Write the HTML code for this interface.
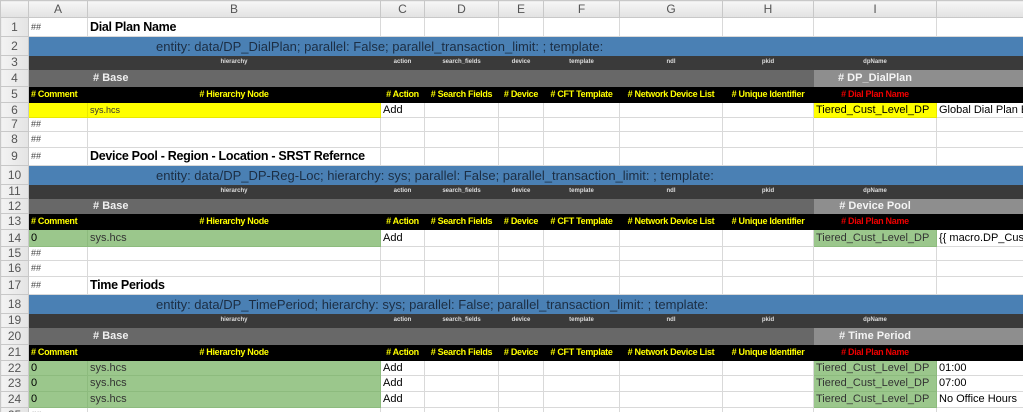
<!DOCTYPE html>
<html><head><meta charset="utf-8"><style>
*{margin:0;padding:0;box-sizing:border-box}
html,body{width:1023px;height:412px;overflow:hidden;background:#fff;font-family:"Liberation Sans",sans-serif}
table{border-collapse:collapse;table-layout:fixed;width:1051px}
td{border:1px solid #d9d9d9;font-size:11px;white-space:nowrap;overflow:hidden;padding:0 2px;color:#000;line-height:11px}
tr.h td{background:linear-gradient(#f6f6f6,#e2e2e2);color:#555;text-align:center;font-size:12px;border-color:#c8c8c8}
td.rn{background:linear-gradient(90deg,#f3f3f3,#e4e4e4);color:#555;text-align:center;font-size:12px;border-color:#c8c8c8;padding:0}
.t{font-weight:bold;font-size:12.5px;letter-spacing:-0.3px}
.bl{background:#4a80b4;border-color:#4a80b4;color:#1c2e44;font-size:13px}
.dk{background:#3a3a3a;border-color:#3a3a3a;color:#ddd;font-size:6px;font-weight:bold;text-align:center}
.gr{background:#686868;border-color:#686868;color:#f0f0f0;font-weight:bold;font-size:11px}
.lg{background:#8e8e8e;border-color:#8e8e8e;color:#f4f4f4;font-weight:bold;text-align:center;font-size:11px}
.bk{background:#000;border-color:#000;color:#ff0;font-weight:bold;font-size:9px;text-align:center;letter-spacing:-.3px}
.bk.r{color:#e00}
.y{background:#ff0;border-color:#e8e800}
.g{background:#9bc78c;border-color:#8dbb7e}
.sm{font-size:9px;color:#444}
</style></head><body>
<table>
<colgroup><col style="width:28px"><col style="width:59px"><col style="width:293px"><col style="width:44px"><col style="width:74px"><col style="width:45px"><col style="width:76px"><col style="width:103px"><col style="width:91px"><col style="width:123px"><col style="width:115px"></colgroup>
<tr class="h" style="height:17px"><td></td><td>A</td><td>B</td><td>C</td><td>D</td><td>E</td><td>F</td><td>G</td><td>H</td><td>I</td><td></td></tr>

<tr style="height:19px"><td class="rn">1</td><td class="sm">##</td><td class="t">Dial Plan Name</td><td></td><td></td><td></td><td></td><td></td><td></td><td></td><td></td></tr>
<tr style="height:19px"><td class="rn">2</td><td class="bl" colspan="10" style="padding-left:127px">entity: data/DP_DialPlan; parallel: False; parallel_transaction_limit: ; template:</td></tr>
<tr style="height:14px"><td class="rn">3</td><td class="dk"></td><td class="dk">hierarchy</td><td class="dk">action</td><td class="dk">search_fields</td><td class="dk">device</td><td class="dk">template</td><td class="dk">ndl</td><td class="dk">pkid</td><td class="dk">dpName</td><td class="dk"></td></tr>
<tr style="height:17px"><td class="rn">4</td><td class="gr"></td><td class="gr">&nbsp;# Base</td><td class="gr" colspan="6"></td><td class="lg"># DP_DialPlan</td><td class="lg"></td></tr>
<tr style="height:16px"><td class="rn">5</td><td class="bk" style="text-align:left"># Comment</td><td class="bk"># Hierarchy Node</td><td class="bk"># Action</td><td class="bk"># Search Fields</td><td class="bk"># Device</td><td class="bk"># CFT Template</td><td class="bk"># Network Device List</td><td class="bk"># Unique Identifier</td><td class="bk r"># Dial Plan Name</td><td class="bk"></td></tr>
<tr style="height:15px"><td class="rn">6</td><td class="y"></td><td class="y sm" style="color:#333">sys.hcs</td><td>Add</td><td></td><td></td><td></td><td></td><td></td><td class="y">Tiered_Cust_Level_DP</td><td>Global Dial Plan El</td></tr>
<tr style="height:14px"><td class="rn">7</td><td class="sm">##</td><td></td><td></td><td></td><td></td><td></td><td></td><td></td><td></td><td></td></tr>
<tr style="height:16px"><td class="rn">8</td><td class="sm">##</td><td></td><td></td><td></td><td></td><td></td><td></td><td></td><td></td><td></td></tr>

<tr style="height:18px"><td class="rn">9</td><td class="sm">##</td><td class="t">Device Pool - Region - Location - SRST Refernce</td><td></td><td></td><td></td><td></td><td></td><td></td><td></td><td></td></tr>
<tr style="height:19px"><td class="rn">10</td><td class="bl" colspan="10" style="padding-left:127px">entity: data/DP_DP-Reg-Loc; hierarchy: sys; parallel: False; parallel_transaction_limit: ; template:</td></tr>
<tr style="height:14px"><td class="rn">11</td><td class="dk"></td><td class="dk">hierarchy</td><td class="dk">action</td><td class="dk">search_fields</td><td class="dk">device</td><td class="dk">template</td><td class="dk">ndl</td><td class="dk">pkid</td><td class="dk">dpName</td><td class="dk"></td></tr>
<tr style="height:15px"><td class="rn">12</td><td class="gr"></td><td class="gr">&nbsp;# Base</td><td class="gr" colspan="6"></td><td class="lg"># Device Pool</td><td class="lg"></td></tr>
<tr style="height:16px"><td class="rn">13</td><td class="bk" style="text-align:left"># Comment</td><td class="bk"># Hierarchy Node</td><td class="bk"># Action</td><td class="bk"># Search Fields</td><td class="bk"># Device</td><td class="bk"># CFT Template</td><td class="bk"># Network Device List</td><td class="bk"># Unique Identifier</td><td class="bk r"># Dial Plan Name</td><td class="bk"></td></tr>
<tr style="height:17px"><td class="rn">14</td><td class="g">0</td><td class="g" style="color:#333">sys.hcs</td><td>Add</td><td></td><td></td><td></td><td></td><td></td><td class="g" style="color:#333">Tiered_Cust_Level_DP</td><td>{{ macro.DP_Cust</td></tr>
<tr style="height:14px"><td class="rn">15</td><td class="sm">##</td><td></td><td></td><td></td><td></td><td></td><td></td><td></td><td></td><td></td></tr>
<tr style="height:16px"><td class="rn">16</td><td class="sm">##</td><td></td><td></td><td></td><td></td><td></td><td></td><td></td><td></td><td></td></tr>

<tr style="height:18px"><td class="rn">17</td><td class="sm">##</td><td class="t">Time Periods</td><td></td><td></td><td></td><td></td><td></td><td></td><td></td><td></td></tr>
<tr style="height:19px"><td class="rn">18</td><td class="bl" colspan="10" style="padding-left:127px">entity: data/DP_TimePeriod; hierarchy: sys; parallel: False; parallel_transaction_limit: ; template:</td></tr>
<tr style="height:14px"><td class="rn">19</td><td class="dk"></td><td class="dk">hierarchy</td><td class="dk">action</td><td class="dk">search_fields</td><td class="dk">device</td><td class="dk">template</td><td class="dk">ndl</td><td class="dk">pkid</td><td class="dk">dpName</td><td class="dk"></td></tr>
<tr style="height:17px"><td class="rn">20</td><td class="gr"></td><td class="gr">&nbsp;# Base</td><td class="gr" colspan="6"></td><td class="lg"># Time Period</td><td class="lg"></td></tr>
<tr style="height:16px"><td class="rn">21</td><td class="bk" style="text-align:left"># Comment</td><td class="bk"># Hierarchy Node</td><td class="bk"># Action</td><td class="bk"># Search Fields</td><td class="bk"># Device</td><td class="bk"># CFT Template</td><td class="bk"># Network Device List</td><td class="bk"># Unique Identifier</td><td class="bk r"># Dial Plan Name</td><td class="bk r" style="text-align:right">#</td></tr>
<tr style="height:15px"><td class="rn">22</td><td class="g">0</td><td class="g" style="color:#333">sys.hcs</td><td>Add</td><td></td><td></td><td></td><td></td><td></td><td class="g" style="color:#333">Tiered_Cust_Level_DP</td><td>01:00</td></tr>
<tr style="height:16px"><td class="rn">23</td><td class="g">0</td><td class="g" style="color:#333">sys.hcs</td><td>Add</td><td></td><td></td><td></td><td></td><td></td><td class="g" style="color:#333">Tiered_Cust_Level_DP</td><td>07:00</td></tr>
<tr style="height:16px"><td class="rn">24</td><td class="g">0</td><td class="g" style="color:#333">sys.hcs</td><td>Add</td><td></td><td></td><td></td><td></td><td></td><td class="g" style="color:#333">Tiered_Cust_Level_DP</td><td>No Office Hours</td></tr>
<tr style="height:16px"><td class="rn">25</td><td class="sm">##</td><td></td><td></td><td></td><td></td><td></td><td></td><td></td><td></td><td></td></tr>
</table>
</body></html>
